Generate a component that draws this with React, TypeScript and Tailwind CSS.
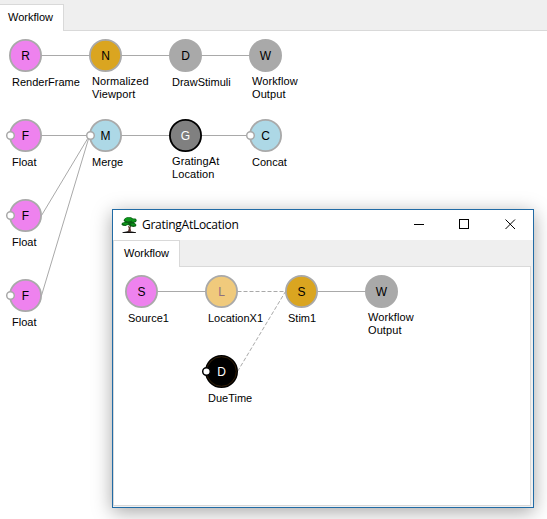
import React from "react";

type NodeProps = {
  x: number;
  y: number;
  letter: string;
  label: string;
  fill: string;
  ring?: string;
  inner?: string;
  color?: string;
  port?: boolean;
};

// A workflow node, centred on (x, y) of its canvas.
function GraphNode({ x, y, letter, label, fill, ring = "#a9a9a9", inner, color = "#000", port }: NodeProps) {
  return (
    <div className="absolute flex w-[33px] flex-col" style={{ left: x - 16, top: y - 16 }}>
      <div className="grid size-[33px] place-items-center">
        <svg width="33" height="33" className="col-start-1 row-start-1 overflow-visible">
          <circle cx="16.5" cy="16.5" r="15.6" fill={fill} stroke={ring} strokeWidth="1.8" />
          {inner && <circle cx="16.5" cy="16.5" r="14.8" fill="none" stroke={inner} strokeWidth="0.8" />}
          {port && <circle cx="1.5" cy="16.5" r="3.8" fill="#fff" stroke={ring} strokeWidth="1.5" />}
        </svg>
        <span className="col-start-1 row-start-1 text-[12px] leading-[14px]" style={{ color }}>
          {letter}
        </span>
      </div>
      <span
        className={
          label.includes("\n")
            ? "mt-[3px] pl-[3px] text-[11px] leading-[13px] tracking-[0.1px] whitespace-pre"
            : "mt-[4px] pl-[3px] text-[11px] leading-[13px] whitespace-pre"
        }
      >
        {label}
      </span>
    </div>
  );
}

function Edge({ from, to, dashed }: { from: [number, number]; to: [number, number]; dashed?: boolean }) {
  return (
    <line
      x1={from[0] + 0.5}
      y1={from[1] + 0.5}
      x2={to[0] + 0.5}
      y2={to[1] + 0.5}
      stroke="#a9a9a9"
      strokeWidth="1"
      strokeDasharray={dashed ? "4 2" : undefined}
    />
  );
}

const violet = "#ee82ee";
const gold = "#daa520";
const gray = "#a9a9a9";
const blue = "#add8e6";

function TreeIcon() {
  return (
    <svg width="16" height="17" viewBox="0 0 16 17">
      <path d="M1.500 15.200l4-.7 2-.6 3 .6 4.500.7v.9h-13.500z" fill="#111" />
      <path d="M6.800 8.500l1.500 1.300 2-1.300-.8 2.500.6 3.500h-3.200l.9-3z" fill="#5a3028" />
      <path
        d="M4 1.200L6 .2h4l2 1.300h2.500l1.300 1.500-.8 2-2 .8 1.300.8 1.200 1.500-.8 1.500-2.500.5-3-.8-2.200-1.500-2.500 1.200-2.700-.3L.3 7.200l1-1.400 2.500-.7-1.300-1.800z"
        fill="#0a5f14"
      />
      <path
        d="M4 1.500L6 .7h3.500l2 1.600-1.500 1.700-3.500.5L4 3.500zM11 2.300h3l1 1.200-2 1.500-2.300-.4zM1.200 6.600l2.500-.8 3 .3.500 1-3 .8zM9.500 6.800l2.500-.4 2.500 1.200-1 1-2.500-.2z"
        fill="#0c961a"
      />
    </svg>
  );
}

function Dialog() {
  return (
    <div className="absolute left-[112px] top-[209px] flex h-[299px] w-[422px] flex-col border border-[#216ba5] bg-white shadow-[0_4px_18px_rgba(0,0,0,0.35)]">
      <div className="flex h-[30px] shrink-0 items-center pl-2">
        <TreeIcon />
        <span className="ml-[5px] font-['Open_Sans',sans-serif] text-[12px] leading-4 tracking-[-0.27px]">
          GratingAtLocation
        </span>
        <svg className="ml-auto mr-[2px]" width="117" height="30" stroke="#000" fill="none">
          <path d="M0 14.500h10M45.500 9.500h9v9h-9z" shapeRendering="crispEdges" />
          <path d="M91.500 9.500l9.500 9.500M101 9.500l-9.500 9.500" />
        </svg>
      </div>
      <div className="flex h-[27px] shrink-0 bg-[#efefef]">
        <div className="w-[67px] border-x border-t border-[#d9d9d9] bg-white pl-[10px] pt-[6px] text-[11px] leading-[13px]">
          Workflow
        </div>
        <div className="mr-[2px] flex-1 border-b border-[#d9d9d9]" />
      </div>
      <div className="flex flex-1 bg-[#f0f0f0] pb-px pr-[2px]">
        <div className="relative -ml-px flex-1 border-b border-r border-[#d9d9d9] bg-white pl-px shadow-[inset_2px_0_0_#d9d9d9] [clip-path:inset(0_0_0_1px)]">
          <svg width="416" height="237" className="block">
            <Edge from={[44, 24]} to={[92, 24]} />
            <Edge from={[124, 24]} to={[172, 24]} dashed />
            <Edge from={[204, 24]} to={[252, 24]} />
            <Edge from={[124, 104]} to={[172, 24]} dashed />
          </svg>
          <GraphNode x={29} y={24} letter="S" label="Source1" fill={violet} />
          <GraphNode x={109} y={24} letter="L" label="LocationX1" fill="#f0ca7c" color="#8c7080" />
          <GraphNode x={189} y={24} letter="S" label="Stim1" fill={gold} />
          <GraphNode x={269} y={24} letter="W" label={"Workflow\nOutput"} fill={gray} />
          <GraphNode x={109} y={104} letter="D" label="DueTime" fill="#000" ring="#000" inner="#3d260a" color="#fff" port />
        </div>
      </div>
    </div>
  );
}

export default function App() {
  return (
    <div className="relative flex h-[519px] w-[547px] flex-col overflow-hidden bg-white font-['Liberation_Sans',Arial,sans-serif] text-black">
      <div className="flex h-[31px] shrink-0 bg-[#efefef] pt-1">
        <div className="w-16 border-r border-t border-[#d9d9d9] bg-white pl-2 pt-[6px] text-[11px] leading-[13px]">
          Workflow
        </div>
        <div className="flex-1 border-b border-[#d9d9d9]" />
      </div>
      <div className="relative flex-1">
        <svg width="547" height="488" className="block">
          <Edge from={[41, 24]} to={[89, 24]} />
          <Edge from={[121, 24]} to={[169, 24]} />
          <Edge from={[201, 24]} to={[249, 24]} />
          <Edge from={[41, 104]} to={[89, 104]} />
          <Edge from={[121, 104]} to={[169, 104]} />
          <Edge from={[201, 104]} to={[249, 104]} />
          <Edge from={[41, 184]} to={[89, 104]} />
          <Edge from={[41, 264]} to={[89, 104]} />
        </svg>
        <GraphNode x={25} y={24} letter="R" label="RenderFrame" fill={violet} />
        <GraphNode x={105} y={24} letter="N" label={"Normalized\nViewport"} fill={gold} />
        <GraphNode x={185} y={24} letter="D" label="DrawStimuli" fill={gray} />
        <GraphNode x={265} y={24} letter="W" label={"Workflow\nOutput"} fill={gray} />
        <GraphNode x={25} y={104} letter="F" label="Float" fill={violet} port />
        <GraphNode x={105} y={104} letter="M" label="Merge" fill={blue} port />
        <GraphNode x={185} y={104} letter="G" label={"GratingAt\nLocation"} fill="#808080" ring="#000" color="#fff" />
        <GraphNode x={265} y={104} letter="C" label="Concat" fill={blue} port />
        <GraphNode x={25} y={184} letter="F" label="Float" fill={violet} port />
        <GraphNode x={25} y={264} letter="F" label="Float" fill={violet} port />
      </div>
      <Dialog />
    </div>
  );
}
